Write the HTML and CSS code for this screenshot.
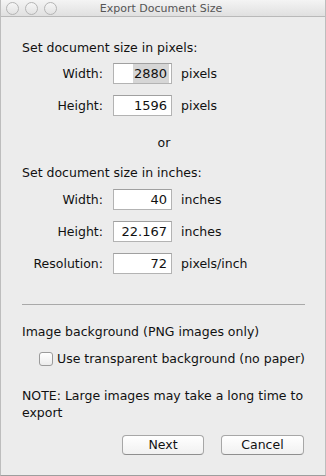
FILE: index.html
```html
<!DOCTYPE html>
<html>
<head>
<meta charset="utf-8">
<link rel="stylesheet" href="styles.css">
</head>
<body>
<div class="window">
  <div class="titlebar">
    <div class="lights"><span class="light"></span><span class="light"></span><span class="light"></span></div>
    <div class="title">Export Document Size</div>
  </div>
  <div class="content">
    <div class="heading h1">Set document size in pixels:</div>
    <div class="form">
      <div class="label">Width:</div>
      <div class="field sel-field"><span class="sel">2880</span></div>
      <div class="unit">pixels</div>
      <div class="label">Height:</div>
      <div class="field">1596</div>
      <div class="unit">pixels</div>
    </div>
    <div class="or">or</div>
    <div class="heading">Set document size in inches:</div>
    <div class="form form2">
      <div class="label">Width:</div>
      <div class="field">40</div>
      <div class="unit">inches</div>
      <div class="label">Height:</div>
      <div class="field">22.167</div>
      <div class="unit">inches</div>
      <div class="label">Resolution:</div>
      <div class="field">72</div>
      <div class="unit">pixels/inch</div>
    </div>
    <div class="separator"></div>
    <div class="heading bg">Image background (PNG images only)</div>
    <label class="check"><span class="box"></span><span>Use transparent background (no paper)</span></label>
    <div class="note">NOTE: Large images may take a long time to export</div>
    <div class="buttons">
      <div class="button next">Next</div>
      <div class="button cancel">Cancel</div>
    </div>
  </div>
</div>
</body>
</html>
```
FILE: styles.css
```css
html, body {
  margin: 0;
  padding: 0;
}
body {
  font-family: "DejaVu Sans", "Noto Sans", sans-serif;
  font-size: 12.5px;
  color: #111;
  background: #ececec;
}
.window {
  width: 326px;
  height: 476px;
  box-sizing: border-box;
  background: #ececec;
  border-left: 1px solid #bdbdbd;
  border-right: 1px solid #bdbdbd;
  border-bottom: 1px solid #9e9e9e;
  overflow: hidden;
}
.titlebar {
  height: 16px;
  border-bottom: 1px solid #b9b9b9;
  background: linear-gradient(#f4f4f4, #e0e0e0);
  display: flex;
  align-items: center;
}
.lights {
  display: flex;
  gap: 6px;
  padding-left: 5px;
}
.light {
  width: 11px;
  height: 11px;
  border-radius: 50%;
  border: 1px solid #b4b4b4;
  background: linear-gradient(#f6f6f6, #e2e2e2);
}
.title {
  flex: 1;
  text-align: center;
  margin-left: -60px;
  font-size: 11px;
  color: #555;
}
.content {
  padding: 0 20px;
}
.heading {
  line-height: 16px;
  padding-left: 1px;
}
.h1 {
  margin-top: 23px;
}
.form {
  display: grid;
  grid-template-columns: 92px 59px auto;
  grid-auto-rows: 21px;
  row-gap: 11px;
  align-items: center;
  margin-top: 7px;
}
.form2 {
  margin-top: 8px;
}
.label {
  text-align: right;
  padding-right: 10px;
}
.field {
  height: 21px;
  box-sizing: border-box;
  background: #fff;
  border: 1px solid #b3b3b3;
  border-top-color: #a0a0a0;
  text-align: right;
  padding-right: 4px;
  font-size: 13px;
  line-height: 19px;
}
.sel-field {
  display: flex;
  justify-content: flex-end;
  padding-right: 2px;
}
.sel {
  flex: none;
  width: 36px;
  height: 19px;
  box-sizing: border-box;
  padding-right: 2px;
  background: #d6d6d6;
  text-align: right;
}
.unit {
  padding-left: 9px;
}
.or {
  text-align: center;
  line-height: 16px;
  margin-top: 19px;
  margin-bottom: 14px;
  padding-left: 2px;
}
.separator {
  height: 1px;
  background: #a9a9a9;
  margin: 30px 0 19px 1px;
}
.check {
  display: flex;
  align-items: center;
  gap: 4px;
  margin-top: 11px;
  margin-left: 18px;
  line-height: 16px;
}
.box {
  width: 12px;
  height: 12px;
  border: 1px solid #9b9b9b;
  border-radius: 3px;
  background: linear-gradient(#ffffff, #ececec);
}
.note {
  margin-top: 20px;
  line-height: 17px;
  padding-left: 1px;
}
.buttons {
  display: flex;
  justify-content: flex-end;
  gap: 17px;
  margin-top: 14px;
  padding-right: 1px;
}
.button {
  height: 20px;
  box-sizing: border-box;
  border: 1px solid #a7a7a7;
  border-bottom-color: #8f8f8f;
  border-radius: 4px;
  background: linear-gradient(#ffffff, #f1f1f1);
  text-align: center;
  line-height: 18px;
  font-size: 12.5px;
}
.next {
  width: 82px;
}
.cancel {
  width: 83px;
}
```
